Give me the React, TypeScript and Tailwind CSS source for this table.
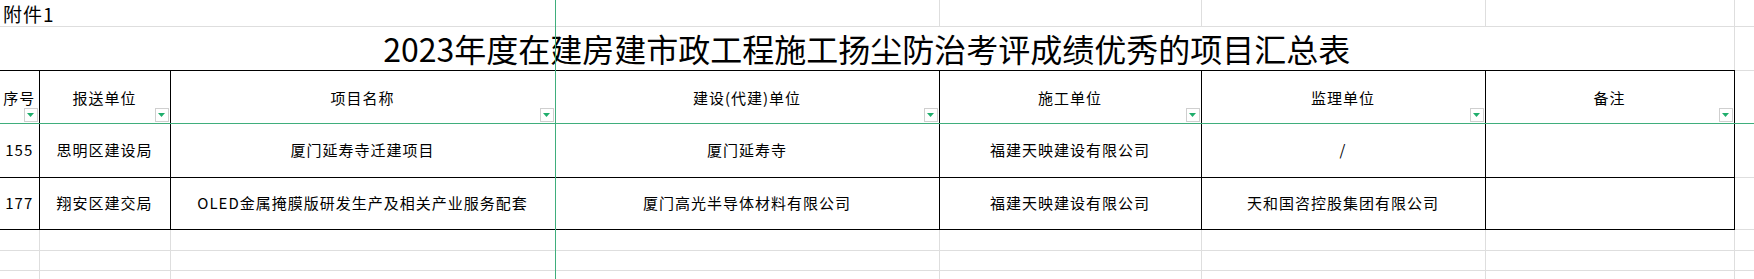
const COLS = [39, 131, 385, 384, 262, 284, 249, 20];

const HEADERS = ['序号', '报送单位', '项目名称', '建设(代建)单位', '施工单位', '监理单位', '备注'];

const ROWS = [
  ['155', '思明区建设局', '厦门延寿寺迁建项目', '厦门延寿寺', '福建天映建设有限公司', '/', ''],
  ['177', '翔安区建交局', 'OLED金属掩膜版研发生产及相关产业服务配套', '厦门高光半导体材料有限公司', '福建天映建设有限公司', '天和国咨控股集团有限公司', ''],
];

const GRID = 'border-r border-b border-[#dedede]';
const LINE = 'border-r border-b border-black';

function FilterButton() {
  return (
    <span className="absolute right-px bottom-px flex h-[14px] w-[14px] items-center justify-center border border-[#cfcfcf] bg-white">
      <svg width="7" height="4" viewBox="0 0 7 4" className="mt-px">
        <polygon points="0,0 7,0 3.5,4" fill="#1fae6c" />
      </svg>
    </span>
  );
}

export default function App() {
  return (
    <div className="relative h-[279px] w-[1754px] overflow-hidden bg-white font-['Noto_Sans_CJK_SC','Liberation_Sans',sans-serif] text-black">
      <table className="w-[1754px] table-fixed border-collapse">
        <colgroup>
          {COLS.map((w, i) => (
            <col key={i} style={{ width: w }} />
          ))}
        </colgroup>
        <tbody>
          {/* 附件 */}
          <tr className="h-[26px]">
            <td colSpan={4} className={`${GRID} pl-[3px] pt-[2px] align-middle text-[19px] tracking-[1px] leading-none whitespace-nowrap`}>
              附件1
            </td>
            <td className={GRID} />
            <td className={GRID} />
            <td className={GRID} />
            <td className={GRID} />
          </tr>

          {/* title */}
          <tr className="h-[44px]">
            <td colSpan={7} className="border-r border-r-[#dedede] border-b border-b-black text-center align-middle text-[32px] leading-none whitespace-nowrap">
              2023年度在建房建市政工程施工扬尘防治考评成绩优秀的项目汇总表
            </td>
            <td className={GRID} />
          </tr>

          {/* header */}
          <tr className="h-[53px]">
            {HEADERS.map((h) => (
              <td key={h} className={`${LINE} relative pt-[3px] text-center align-middle text-[15px] tracking-[1px] whitespace-nowrap`}>
                {h}
                <FilterButton />
              </td>
            ))}
            <td className={GRID} />
          </tr>

          {ROWS.map((row, r) => (
            <tr key={r} className={r === 0 ? 'h-[54px]' : 'h-[52px]'}>
              {row.map((cell, c) => (
                <td key={c} className={`${LINE} text-center align-middle text-[15px] tracking-[1px] whitespace-nowrap`}>
                  {cell}
                </td>
              ))}
              <td className={GRID} />
            </tr>
          ))}

          {[21, 20, 20].map((h, r) => (
            <tr key={`e${r}`} style={{ height: h }}>
              {COLS.map((_, c) => (
                <td key={c} className={GRID} />
              ))}
            </tr>
          ))}
        </tbody>
      </table>

      {/* frozen pane lines */}
      <div className="absolute top-[123px] right-0 left-0 h-px bg-[#3fae7c]" />
      <div className="absolute top-0 bottom-0 left-[555px] w-px bg-[#3fae7c]" />
    </div>
  );
}
